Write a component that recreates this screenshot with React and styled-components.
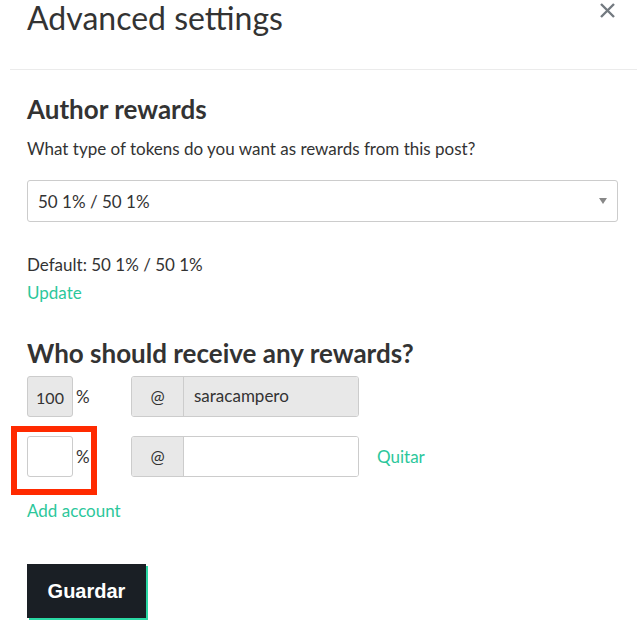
import React from "react";
import styled, { createGlobalStyle } from "styled-components";

const GlobalStyle = createGlobalStyle`
  body {
    margin: 0;
    background: #fff;
    font-family: Lato, "Open Sans", sans-serif;
    color: #333;
  }
`;

const Modal = styled.div`
  width: 637px;
  height: 644px;
  padding-left: 10px;
  box-sizing: border-box;
  overflow: hidden;
`;

const Header = styled.div`
  display: flex;
  justify-content: space-between;
  align-items: flex-start;
  height: 70px;
  box-sizing: border-box;
  border-bottom: 1px solid #ebebeb;
  padding: 0 22px 0 17px;
`;

const Title = styled.h1`
  margin: 0;
  padding-top: 1px;
  font-size: 32px;
  font-weight: 400;
  line-height: 34px;
  color: #333;
`;

const Close = styled.button`
  border: 0;
  background: none;
  padding: 0;
  margin-top: 3px;
  width: 15px;
  height: 15px;
  cursor: pointer;
  display: flex;
`;

const Body = styled.div`
  padding: 0 19px 0 17px;
`;

const Heading = styled.h2`
  margin: 0;
  font-size: 26px;
  font-weight: 700;
  line-height: 30px;
  color: #333;
  margin-top: ${(p) => p.$top}px;
`;

const Text = styled.p`
  margin: 0;
  font-size: 17px;
  line-height: 20px;
  color: #333;
  margin-top: ${(p) => p.$top || 0}px;
`;

const Link = styled.a`
  display: block;
  font-size: 17px;
  line-height: 20px;
  color: #2cc79b;
  text-decoration: none;
  cursor: pointer;
  margin-top: ${(p) => p.$top || 0}px;
`;

const Select = styled.div`
  margin-top: 21px;
  height: 42px;
  box-sizing: border-box;
  border: 1px solid #ccc;
  border-radius: 3px;
  display: flex;
  align-items: center;
  justify-content: space-between;
  padding: 0 10px 0 10px;
  font-size: 17px;
`;

const Caret = styled.span`
  width: 0;
  height: 0;
  border-left: 4px solid transparent;
  border-right: 4px solid transparent;
  border-top: 6px solid #888;
`;

const Rows = styled.div`
  display: flex;
  flex-direction: column;
  gap: 19px;
  margin-top: 8px;
`;

const Row = styled.div`
  display: flex;
  align-items: center;
  height: 41px;
`;

const PctWrap = styled.div`
  position: relative;
  display: flex;
  align-items: center;
  width: 104px;
`;

const Pct = styled.div`
  width: 46px;
  height: 41px;
  box-sizing: border-box;
  border: 1px solid #ccc;
  border-radius: 3px;
  background: ${(p) => (p.$disabled ? "#e8e8e8" : "#fff")};
  display: flex;
  align-items: center;
  justify-content: center;
  font-size: 16px;
  padding-top: 2px;
`;

const PctSign = styled.span`
  font-size: 17px;
  margin-left: 3px;
`;

const Highlight = styled.div`
  position: absolute;
  left: -16px;
  top: -10px;
  width: 86px;
  height: 69px;
  box-sizing: border-box;
  border: 6px solid #ff2a00;
  pointer-events: none;
`;

const Group = styled.div`
  display: flex;
  width: 228px;
  height: 41px;
  box-sizing: border-box;
  border: 1px solid #ccc;
  border-radius: 3px;
  overflow: hidden;
`;

const Addon = styled.span`
  width: 51px;
  background: #e8e8e8;
  border-right: 1px solid #ccc;
  display: flex;
  align-items: center;
  justify-content: center;
  font-size: 17px;
`;

const Field = styled.div`
  flex: 1;
  background: ${(p) => (p.$disabled ? "#e8e8e8" : "#fff")};
  display: flex;
  align-items: center;
  padding-left: 10px;
  font-size: 17px;
  padding-bottom: 2px;
`;

const Quitar = styled(Link)`
  margin-left: 18px;
`;

const Button = styled.button`
  margin-top: 43px;
  width: 119px;
  height: 54px;
  border: 0;
  border-radius: 0;
  background: #1a1f25;
  color: #fff;
  font-family: "Liberation Sans", Arial, sans-serif;
  font-weight: 700;
  font-size: 20px;
  box-shadow: 2px 2px 0 #2ad8a4;
  cursor: pointer;
`;

function CloseIcon() {
  return (
    <svg width="15" height="15" viewBox="0 0 15 15">
      <path d="M1 1 L14 14 M14 1 L1 14" stroke="#737a80" strokeWidth="2.4" />
    </svg>
  );
}

export default function App() {
  return (
    <>
      <GlobalStyle />
      <Modal>
        <Header>
          <Title>Advanced settings</Title>
          <Close aria-label="Close">
            <CloseIcon />
          </Close>
        </Header>
        <Body>
          <Heading $top={24}>Author rewards</Heading>
          <Text $top={15}>What type of tokens do you want as rewards from this post?</Text>
          <Select>
            <span>50 1% / 50 1%</span>
            <Caret />
          </Select>
          <Text $top={33}>Default: 50 1% / 50 1%</Text>
          <Link $top={8}>Update</Link>
          <Heading $top={35}>Who should receive any rewards?</Heading>
          <Rows>
            <Row>
              <PctWrap>
                <Pct $disabled>100</Pct>
                <PctSign>%</PctSign>
              </PctWrap>
              <Group>
                <Addon>@</Addon>
                <Field $disabled>saracampero</Field>
              </Group>
            </Row>
            <Row>
              <PctWrap>
                <Pct />
                <PctSign>%</PctSign>
                <Highlight />
              </PctWrap>
              <Group>
                <Addon>@</Addon>
                <Field />
              </Group>
              <Quitar>Quitar</Quitar>
            </Row>
          </Rows>
          <Link $top={24}>Add account</Link>
          <Button>Guardar</Button>
        </Body>
      </Modal>
    </>
  );
}
